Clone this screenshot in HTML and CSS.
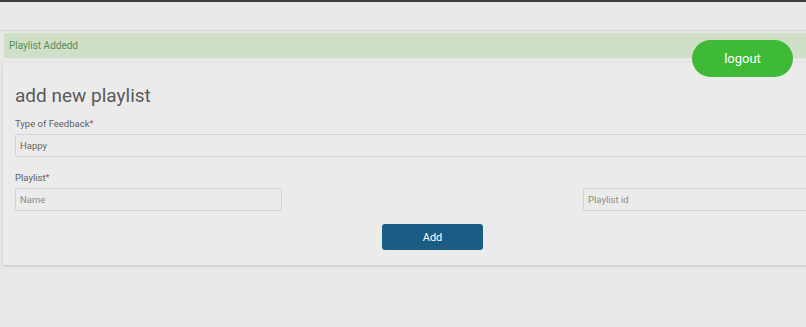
FILE: index.html
```html
<!DOCTYPE html>
<html lang="en">
<head>
    <meta charset="UTF-8">
    <meta name="viewport" content="width=device-width, initial-scale=1.0">
    <title>Add playlist</title>
    <link rel="stylesheet" href="styles.css">
</head>
<body>

    <div class="topbar"></div>

    <div class="page">
        <div class="page-inner">
            <!-- message after save -->
            <div class="alert">Playlist Addedd</div>

            <button class="logout-button">logout</button>

            <div class="card">
                <h2 class="card-title">add new playlist</h2>

                <div class="field">
                    <label class="field-label">Type of Feedback<span class="req">*</span></label>
                    <input class="text-input" type="text" value="Happy">
                </div>

                <div class="field field-second">
                    <label class="field-label">Playlist<span class="req">*</span></label>
                    <div class="input-row">
                        <input class="text-input half" type="text" placeholder="Name">
                        <input class="text-input half" type="text" placeholder="Playlist id">
                    </div>
                </div>

                <div class="actions">
                    <button class="add-button">Add</button>
                </div>
            </div>
        </div>
    </div>

</body>
</html>
```

FILE: styles.css
```css
body {
    margin: 0;
    padding: 0;
    background-color: #e9e9e9;
    font-family: 'Roboto', 'Liberation Sans', sans-serif;
    overflow: hidden;
    height: 100vh;
}

.topbar {
    height: 2px;
    background-color: #3c3c3c;
}

/* page is cut at the right side, like in the app */
.page {
    margin-top: 28px;
    border-top: 1px solid #d6d6d6;
    overflow: hidden;
    padding-bottom: 6px;
}

.page-inner {
    position: relative;
    padding-top: 2px;
    width: 880px;
}

.alert {
    margin-left: 4px;
    height: 25px;
    line-height: 26px;
    padding-left: 5px;
    background-color: #cfdfc8;
    color: #5e8c55;
    font-size: 10px;
}

.logout-button {
    position: absolute;
    top: 9px;
    left: 692px;
    width: 101px;
    height: 37px;
    border: none;
    border-radius: 19px;
    background-color: #3fba38;
    color: #fff;
    font-family: inherit;
    font-size: 13px;
    cursor: pointer;
}

.card {
    margin: 5px 0 0 3px;
    width: 835px;
    padding: 21px 12px 15px 12px;
    background-color: #ebebeb;
    box-shadow: 0 1px 3px rgba(0, 0, 0, 0.18);
}

.card-title {
    margin: 0;
    font-size: 19px;
    line-height: 24px;
    font-weight: normal;
    color: #5a5a5a;
}

.field {
    margin-top: 10px;
    display: flex;
    flex-direction: column;
    gap: 4px;
}

.field-second {
    margin-top: 15px;
}

.field-label {
    font-size: 9.5px;
    line-height: 12px;
    color: #5e5e5e;
}

.req {
    color: #d0424c;
}

.text-input {
    box-sizing: border-box;
    height: 23px;
    margin: 0;
    padding: 0 4px;
    border: 1px solid #d3d3d3;
    border-radius: 2px;
    background-color: #ebebeb;
    font-family: inherit;
    font-size: 9.5px;
    color: #666;
    outline: none;
}

.text-input::placeholder {
    color: #8c8c8c;
}

.input-row {
    display: flex;
    justify-content: space-between;
}

.half {
    width: 267px;
}

.actions {
    margin-top: 13px;
    display: flex;
    justify-content: center;
}

.add-button {
    width: 101px;
    height: 26px;
    border: none;
    border-radius: 3px;
    background-color: #1b5c85;
    color: #fff;
    font-family: inherit;
    font-size: 11px;
    cursor: pointer;
}
```
